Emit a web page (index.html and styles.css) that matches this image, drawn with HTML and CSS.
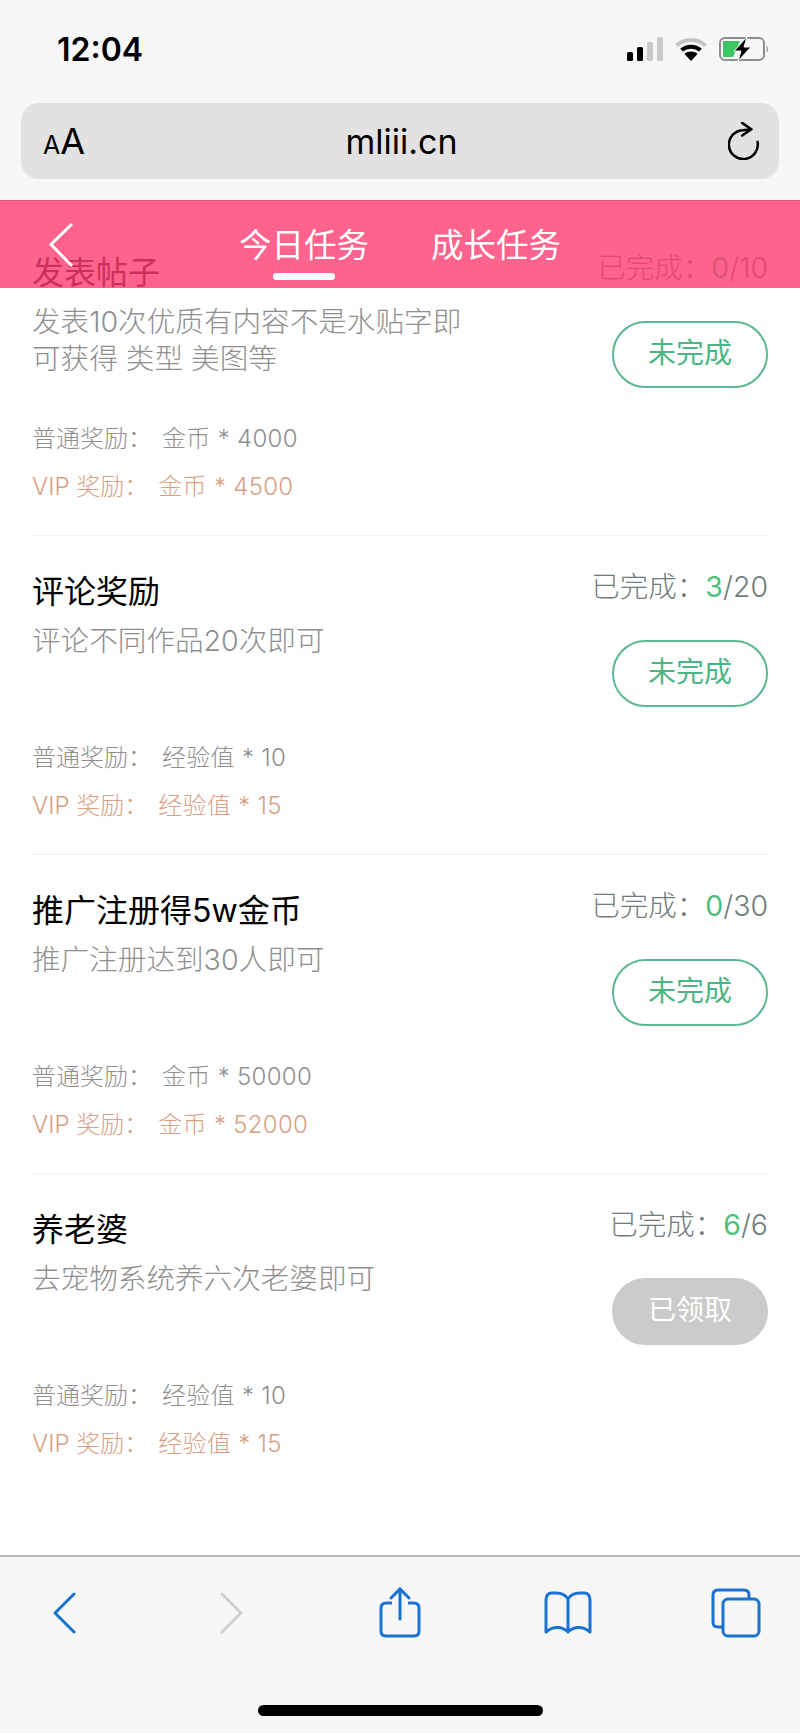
FILE: index.html
```html
<!DOCTYPE html>
<html lang="zh-CN">
<head>
    <meta charset="UTF-8">
    <meta name="viewport" content="width=device-width, initial-scale=1.0">
    <title>任务中心</title>
    <link rel="stylesheet" href="styles.css">
</head>
<body>
    <div class="browser-top">
        <div class="status-bar">
            <span class="time">12:04</span>
            <div class="status-icons">
                <svg class="signal" width="36" height="24" viewBox="0 0 36 24">
                    <rect x="0" y="15" width="6" height="9" rx="1.5" fill="#000"/>
                    <rect x="10" y="10" width="6" height="14" rx="1.5" fill="#000"/>
                    <rect x="20" y="5" width="6" height="19" rx="1.5" fill="#c9c9c9"/>
                    <rect x="30" y="0" width="6" height="24" rx="1.5" fill="#c9c9c9"/>
                </svg>
                <svg class="wifi" width="32" height="24" viewBox="0 0 32 24">
                    <path d="M1.5 8.5 C9.5 1 22.5 1 30.5 8.5" fill="none" stroke="#c4c4c4" stroke-width="4"/>
                    <path d="M6.5 13 C12 8.5 20 8.5 25.5 13" fill="none" stroke="#000" stroke-width="4"/>
                    <path d="M16 24 L9.5 17 C13 13.8 19 13.8 22.5 17 Z" fill="#000"/>
                </svg>
                <svg class="battery" width="50" height="24" viewBox="0 0 50 24">
                    <rect x="1" y="1" width="44" height="22" rx="5" fill="none" stroke="#8e8e8e" stroke-width="2"/>
                    <path d="M4 4 H21 L14 20 H4 Z" fill="#3fc463"/>
                    <path d="M47.5 8.5 C49.5 9.5 49.5 14.5 47.5 15.5 Z" fill="#9a9a9a"/>
                    <path d="M28 0 L15 14 H22 L19 24 L32 10 H25 Z" fill="#000" stroke="#f7f7f7" stroke-width="1"/>
                </svg>
            </div>
        </div>
        <div class="address-bar">
            <span class="aa"><small>A</small>A</span>
            <span class="url">mliii.cn</span>
            <div class="reload-wrap">
                <svg width="32" height="38" viewBox="0 0 34 42">
                    <path d="M32 22 A16 16 0 1 1 16 9 L25 8" fill="none" stroke="#000" stroke-width="2.8" stroke-linecap="round"/>
                    <path d="M15 1 L25 8 L15 15" fill="none" stroke="#000" stroke-width="2.8" stroke-linecap="round" stroke-linejoin="round"/>
                </svg>
            </div>
        </div>
    </div>

    <main class="page">
        <header class="page-header">
            <svg class="header-back" width="26" height="46" viewBox="0 0 26 46">
                <path d="M23 2 L2 22.500 L23 44" fill="none" stroke="#fff" stroke-width="3"/>
            </svg>
            <div class="tab active">今日任务</div>
            <div class="tab">成长任务</div>
        </header>

        <div class="task-list">
            <section class="task">
                <div class="task-top">
                    <div class="task-info">
                        <h2>发表帖子</h2>
                        <p>发表10次优质有内容不是水贴字即可获得 类型 美图等</p>
                    </div>
                    <div class="task-side">
                        <div class="progress">已完成：<b>0</b>/10</div>
                        <div class="btn">未完成</div>
                    </div>
                </div>
                <div class="reward">普通奖励：<span>金币 * 4000</span></div>
                <div class="reward vip">VIP 奖励：<span>金币 * 4500</span></div>
            </section>

            <section class="task">
                <div class="task-top">
                    <div class="task-info">
                        <h2>评论奖励</h2>
                        <p>评论不同作品20次即可</p>
                    </div>
                    <div class="task-side">
                        <div class="progress">已完成：<b>3</b>/20</div>
                        <div class="btn">未完成</div>
                    </div>
                </div>
                <div class="reward">普通奖励：<span>经验值 * 10</span></div>
                <div class="reward vip">VIP 奖励：<span>经验值 * 15</span></div>
            </section>

            <section class="task">
                <div class="task-top">
                    <div class="task-info">
                        <h2>推广注册得5w金币</h2>
                        <p>推广注册达到30人即可</p>
                    </div>
                    <div class="task-side">
                        <div class="progress">已完成：<b>0</b>/30</div>
                        <div class="btn">未完成</div>
                    </div>
                </div>
                <div class="reward">普通奖励：<span>金币 * 50000</span></div>
                <div class="reward vip">VIP 奖励：<span>金币 * 52000</span></div>
            </section>

            <section class="task last">
                <div class="task-top">
                    <div class="task-info">
                        <h2>养老婆</h2>
                        <p>去宠物系统养六次老婆即可</p>
                    </div>
                    <div class="task-side">
                        <div class="progress">已完成：<b>6</b>/6</div>
                        <div class="btn done">已领取</div>
                    </div>
                </div>
                <div class="reward">普通奖励：<span>经验值 * 10</span></div>
                <div class="reward vip">VIP 奖励：<span>经验值 * 15</span></div>
            </section>
        </div>
    </main>

    <footer class="toolbar">
        <div class="toolbar-icons">
            <div class="tool">
                <svg width="24" height="42" viewBox="0 0 24 42">
                    <path d="M22 2 L3 21 L22 40" fill="none" stroke="#1a73d2" stroke-width="3" stroke-linecap="round" stroke-linejoin="round"/>
                </svg>
            </div>
            <div class="tool">
                <svg width="24" height="42" viewBox="0 0 24 42">
                    <path d="M2 2 L21 21 L2 40" fill="none" stroke="#cfcfcf" stroke-width="3" stroke-linecap="round" stroke-linejoin="round"/>
                </svg>
            </div>
            <div class="tool">
                <svg width="42" height="52" viewBox="0 0 42 52">
                    <path d="M13 16 H7 Q2 16 2 21 V44 Q2 49 7 49 H35 Q40 49 40 44 V21 Q40 16 35 16 H29" fill="none" stroke="#1a73d2" stroke-width="3"/>
                    <path d="M21 32 V3 M12 11 L21 2 L30 11" fill="none" stroke="#1a73d2" stroke-width="3" stroke-linecap="round"/>
                </svg>
            </div>
            <div class="tool">
                <svg width="48" height="44" viewBox="0 0 48 44">
                    <path d="M24 8 C21 3 17 2 12 2 H8 Q2 2 2 9 V41 C9 35 18 35 24 41 C30 35 39 35 46 41 V9 Q46 2 40 2 H36 C31 2 27 3 24 8 V40" fill="none" stroke="#1a73d2" stroke-width="3" stroke-linejoin="round"/>
                </svg>
            </div>
            <div class="tool">
                <svg width="50" height="50" viewBox="0 0 50 50">
                    <path d="M38 10 V7 Q38 2 33 2 H7 Q2 2 2 7 V34 Q2 39 7 39 H12" fill="none" stroke="#1a73d2" stroke-width="3"/>
                    <rect x="12" y="11" width="36" height="37" rx="5" fill="none" stroke="#1a73d2" stroke-width="3"/>
                </svg>
            </div>
        </div>
        <div class="home-bar"></div>
    </footer>
</body>
</html>
```

FILE: styles.css
```css
* {
    box-sizing: border-box;
}
body {
    margin: 0;
    width: 800px;
    height: 1733px;
    overflow: hidden;
    font-family: Inter, "Noto Sans CJK SC", sans-serif;
    background-color: #fff;
    display: flex;
    flex-direction: column;
}

/* safari top */
.browser-top {
    height: 200px;
    background-color: #f7f7f7;
    padding: 0 21px;
    flex-shrink: 0;
}
.status-bar {
    height: 103px;
    display: flex;
    justify-content: space-between;
    align-items: flex-start;
    padding: 29px 10px 0 36px;
}
.time {
    font-size: 32px;
    font-weight: 600;
    line-height: 42px;
    color: #000;
}
.status-icons {
    display: flex;
    align-items: center;
    gap: 12px;
    margin-top: 8px;
}
.address-bar {
    height: 76px;
    background-color: #e2e2e2;
    border-radius: 18px;
    display: grid;
    grid-template-columns: 1fr auto 1fr;
    align-items: center;
    padding: 0 19px 0 22px;
}
.aa {
    font-size: 36px;
    color: #000;
}
.aa small {
    font-size: 25px;
}
.url {
    font-size: 34px;
    color: #000;
}
.reload-wrap {
    display: flex;
    justify-content: flex-end;
    height: 38px;
}

/* page */
.page {
    flex: 1;
    position: relative;
    overflow: hidden;
    background-color: #fff;
}
.page-header {
    position: absolute;
    top: 0;
    left: 0;
    right: 0;
    height: 88px;
    background-color: rgba(252, 60, 111, 0.8);
    border-top: 1px solid #d9587c;
    display: flex;
    justify-content: center;
    gap: 62px;
}
.header-back {
    position: absolute;
    left: 49px;
    top: 21px;
}
.tab {
    font-size: 32.5px;
    line-height: 44px;
    padding-top: 23px;
    color: #fff;
    position: relative;
}
.tab.active::after {
    content: "";
    position: absolute;
    left: 34px;
    right: 34px;
    top: 72px;
    height: 7px;
    border-radius: 3px;
    background-color: #fff;
}

.task-list {
    padding: 17px 32px 0;
}
.task {
    height: 319px;
    border-bottom: 1px solid #f0f0f0;
    padding-top: 31px;
}
.task.last {
    border-bottom: none;
}
.task-top {
    height: 167px;
    display: flex;
    justify-content: space-between;
}
.task-info {
    width: 440px;
}
.task-info h2 {
    margin: 3px 0 0;
    font-size: 32px;
    line-height: 44px;
    font-weight: 400;
    color: #000;
}
.task-info p {
    margin: 8px 0 0;
    font-size: 28.6px;
    line-height: 37px;
    font-weight: 300;
    color: #8f8f8f;
}
.task-side {
    display: flex;
    flex-direction: column;
    align-items: flex-end;
}
.progress {
    font-size: 28.5px;
    line-height: 40px;
    font-weight: 300;
    color: #6f7c7c;
    white-space: nowrap;
}
.progress b {
    font-weight: 400;
    color: #4fc07a;
}
.btn {
    margin-top: 33px;
    width: 156px;
    height: 67px;
    border: 2px solid #5db88f;
    border-radius: 34px;
    font-size: 28px;
    line-height: 60px;
    text-align: center;
    color: #4cb584;
}
.btn.done {
    background-color: #cbcbcb;
    border-color: #cbcbcb;
    color: #fff;
}
.reward {
    font-size: 24px;
    line-height: 48px;
    font-weight: 300;
    color: #8f8f8f;
}
.reward span {
    margin-left: 10px;
    letter-spacing: 0.3px;
}
.reward.vip {
    color: #d89f85;
}

/* safari bottom */
.toolbar {
    height: 178px;
    flex-shrink: 0;
    background-color: #f7f7f7;
    border-top: 2px solid #bdbdbd;
    position: relative;
}
.toolbar-icons {
    display: grid;
    grid-template-columns: repeat(5, 168px);
    height: 52px;
    margin: 30px 0 0 -20px;
}
.tool {
    display: flex;
    align-items: center;
    justify-content: center;
}
.home-bar {
    position: absolute;
    left: 258px;
    top: 148px;
    width: 285px;
    height: 11px;
    border-radius: 6px;
    background-color: #000;
}
```
